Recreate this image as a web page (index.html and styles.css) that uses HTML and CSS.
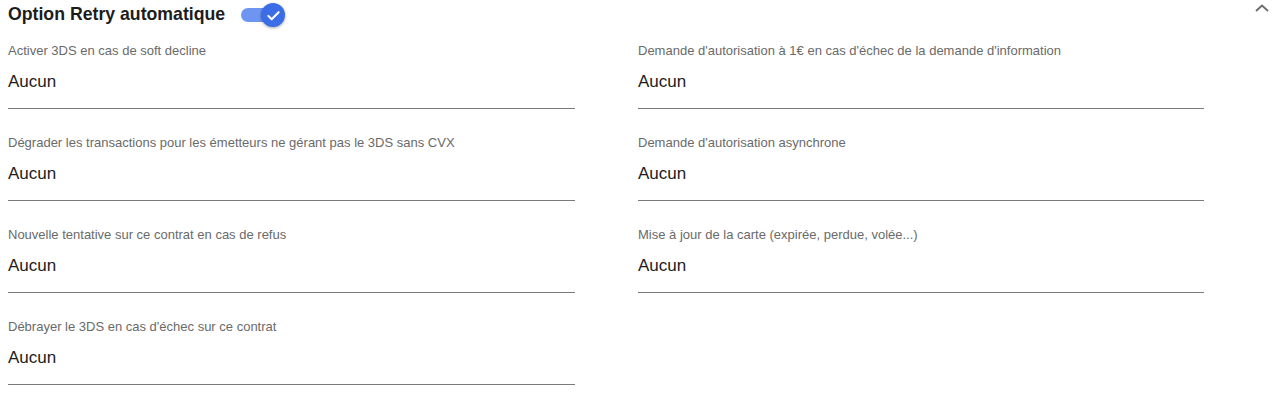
FILE: index.html
```html
<!DOCTYPE html>
<html lang="fr">
<head>
<meta charset="utf-8">
<link rel="stylesheet" href="styles.css">
</head>
<body>
<section class="panel">
  <header class="panel-header">
    <h2 class="panel-title">Option Retry automatique</h2>
    <span class="toggle" role="switch" aria-checked="true">
      <span class="toggle-track"></span>
      <span class="toggle-knob">
        <svg viewBox="0 0 24 24" width="19" height="19"><path d="M5.5 12.5l4.2 4.2L18.5 7.8" fill="none" stroke="#fff" stroke-width="2.6" stroke-linecap="round" stroke-linejoin="round"/></svg>
      </span>
    </span>
    <span class="chevron">
      <svg viewBox="0 0 14 8" width="14" height="8"><path d="M1 7L7 1.5 13 7" fill="none" stroke="#6b6b6b" stroke-width="1.8"/></svg>
    </span>
  </header>
  <div class="fields">
    <div class="field"><div class="field-label">Activer 3DS en cas de soft decline</div><div class="field-value">Aucun</div></div>
    <div class="field"><div class="field-label">Demande d'autorisation à 1€ en cas d'échec de la demande d'information</div><div class="field-value">Aucun</div></div>
    <div class="field"><div class="field-label">Dégrader les transactions pour les émetteurs ne gérant pas le 3DS sans CVX</div><div class="field-value">Aucun</div></div>
    <div class="field"><div class="field-label">Demande d'autorisation asynchrone</div><div class="field-value">Aucun</div></div>
    <div class="field"><div class="field-label">Nouvelle tentative sur ce contrat en cas de refus</div><div class="field-value">Aucun</div></div>
    <div class="field"><div class="field-label">Mise à jour de la carte (expirée, perdue, volée...)</div><div class="field-value">Aucun</div></div>
    <div class="field"><div class="field-label">Débrayer le 3DS en cas d'échec sur ce contrat</div><div class="field-value">Aucun</div></div>
  </div>
</section>
</body>
</html>
```

FILE: styles.css
```css
* { box-sizing: border-box; }
html, body { margin: 0; padding: 0; background: #fff; }
body { font-family: "Liberation Sans", Arial, sans-serif; color: #1f1f1f; }

.panel { padding: 0 10px 0 8px; }

.panel-header {
  display: flex;
  align-items: center;
  height: 28px;
}
.panel-title {
  margin: 0;
  font-size: 17.7px;
  line-height: 28px;
  font-weight: 700;
  color: #1c1c1c;
}
.toggle {
  position: relative;
  display: inline-block;
  width: 46px;
  height: 26px;
  margin-left: 16px;
  margin-top: 2px;
}
.toggle-track {
  position: absolute;
  left: 0;
  top: 6px;
  width: 38px;
  height: 14px;
  border-radius: 7px;
  background: #6f95f2;
}
.toggle-knob {
  position: absolute;
  left: 20px;
  top: 1px;
  width: 24px;
  height: 24px;
  border-radius: 50%;
  background: #3a6de6;
  box-shadow: 0 1px 3px rgba(0,0,0,0.35);
  display: flex;
  align-items: center;
  justify-content: center;
}
.toggle-knob svg { display: block; }
.chevron {
  margin-left: auto;
  align-self: flex-start;
  margin-top: 4px;
  display: flex;
}
.chevron svg { display: block; }

.fields {
  display: grid;
  grid-template-columns: 567px 566px;
  column-gap: 63px;
  margin-top: -11px;
}
.field {
  padding: 26px 0 16px 0;
  border-bottom: 1px solid #7b7b7b;
}
.field-label {
  font-size: 13px;
  line-height: 16px;
  color: #6a6a6a;
  white-space: nowrap;
}
.field-value {
  margin-top: 13px;
  font-size: 17px;
  line-height: 20px;
  color: #1c1c1c;
}
```
